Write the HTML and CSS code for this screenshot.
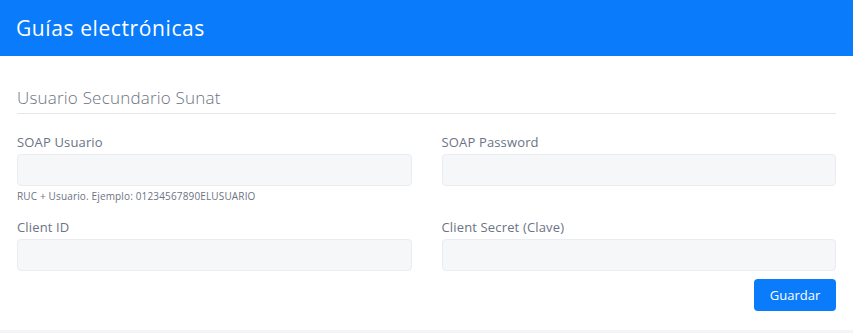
FILE: index.html
```html
<!DOCTYPE html>
<html lang="es">
<head>
    <meta charset="UTF-8">
    <meta name="viewport" content="width=device-width, initial-scale=1.0">
    <title>Guías electrónicas</title>
    <link rel="stylesheet" href="styles.css">
</head>
<body>
    <div class="card">
        <div class="card-header">
            <h1>Guías electrónicas</h1>
        </div>

        <div class="card-body">
            <h2 class="section-title">Usuario Secundario Sunat</h2>

            <form class="form-grid">
                <div class="field">
                    <label for="soapUser">SOAP Usuario</label>
                    <input type="text" id="soapUser">
                    <small class="help">RUC + Usuario. Ejemplo: 01234567890ELUSUARIO</small>
                </div>
                <div class="field">
                    <label for="soapPass">SOAP Password</label>
                    <input type="password" id="soapPass">
                </div>
                <div class="field">
                    <label for="clientId">Client ID</label>
                    <input type="text" id="clientId">
                </div>
                <div class="field">
                    <label for="clientSecret">Client Secret (Clave)</label>
                    <input type="text" id="clientSecret">
                </div>
            </form>

            <div class="actions">
                <button type="button" class="btn-primary">Guardar</button>
            </div>
        </div>
    </div>
</body>
</html>
```

FILE: styles.css
```css
* {
    margin: 0;
    padding: 0;
    box-sizing: border-box;
}

body {
    font-family: 'Open Sans', 'Noto Sans', sans-serif;
    background: #f3f4f7;
    color: #6b7385;
}

.card {
    background: #fff;
}

.card-header {
    height: 56px;
    background: #0a7bfb;
    display: flex;
    align-items: center;
    padding: 0 16px;
}

.card-header h1 {
    color: #fff;
    font-size: 21px;
    font-weight: 400;
    letter-spacing: 0.6px;
}

.card-body {
    padding: 30px 17px 19px;
}

.section-title {
    font-size: 17px;
    font-weight: 300;
    line-height: 24px;
    letter-spacing: 0.2px;
    color: #6c7382;
    padding-bottom: 3px;
    border-bottom: 1px solid #e3e6ea;
    margin-bottom: 20px;
}

.form-grid {
    display: grid;
    grid-template-columns: 1fr 1fr;
    column-gap: 30px;
    row-gap: 16px;
}

.field label {
    display: block;
    font-size: 13px;
    line-height: 16px;
    letter-spacing: 0.15px;
    margin-bottom: 4px;
    color: #6b7385;
}

.field input {
    display: block;
    width: 100%;
    height: 32px;
    background: #f5f7f9;
    border: 1px solid #e9ecf0;
    border-radius: 4px;
    outline: none;
}

.help {
    display: block;
    margin-top: 3px;
    font-size: 10px;
    line-height: 14px;
    letter-spacing: 0.15px;
    color: #6b7385;
}

.actions {
    display: flex;
    justify-content: flex-end;
    margin-top: 8px;
}

.btn-primary {
    width: 82px;
    height: 32px;
    background: #0a7bfb;
    color: #fff;
    border: none;
    border-radius: 4px;
    font-family: inherit;
    font-size: 13px;
    font-weight: 500;
}
```
